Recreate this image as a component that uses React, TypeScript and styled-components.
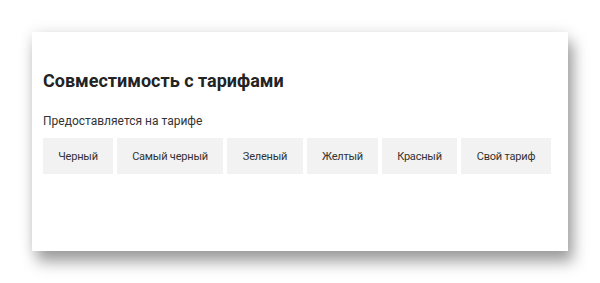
import React from "react";
import styled, { createGlobalStyle } from "styled-components";

const Global = createGlobalStyle`
  html, body { margin: 0; padding: 0; background: #ffffff; }
  body { font-family: Roboto, "Noto Sans", sans-serif; }
`;

const Page = styled.div`
  padding: 32px 32px 0 32px;
  width: 600px;
  height: 283px;
  box-sizing: border-box;
`;

const Card = styled.section`
  width: 536px;
  height: 219px;
  box-sizing: border-box;
  background: #ffffff;
  padding: 37px 11px 0 11px;
  box-shadow: 5px 11px 14px rgba(0, 0, 0, 0.36), 0 0 14px rgba(0, 0, 0, 0.1);
`;

const Title = styled.h2`
  margin: 0;
  font-size: 18px;
  line-height: 24px;
  font-weight: 700;
  color: #232323;
`;

const Label = styled.div`
  margin-top: 19px;
  font-size: 12px;
  line-height: 18px;
  color: #333333;
`;

const Tags = styled.div`
  display: flex;
  gap: 4px;
  margin-top: 8px;
`;

const Tag = styled.div<{ $w: number }>`
  width: ${(p) => p.$w}px;
  height: 36px;
  display: flex;
  align-items: center;
  justify-content: center;
  background: #f2f2f2;
  font-size: 11px;
  letter-spacing: -0.2px;
  color: #333333;
`;

const tariffs: [string, number][] = [
  ["Черный", 70],
  ["Самый черный", 106],
  ["Зеленый", 76],
  ["Желтый", 71],
  ["Красный", 75],
  ["Свой тариф", 90],
];

export default function App() {
  return (
    <>
      <Global />
      <Page>
        <Card>
          <Title>Совместимость с тарифами</Title>
          <Label>Предоставляется на тарифе</Label>
          <Tags>
            {tariffs.map(([t, w]) => (
              <Tag key={t} $w={w}>
                {t}
              </Tag>
            ))}
          </Tags>
        </Card>
      </Page>
    </>
  );
}
